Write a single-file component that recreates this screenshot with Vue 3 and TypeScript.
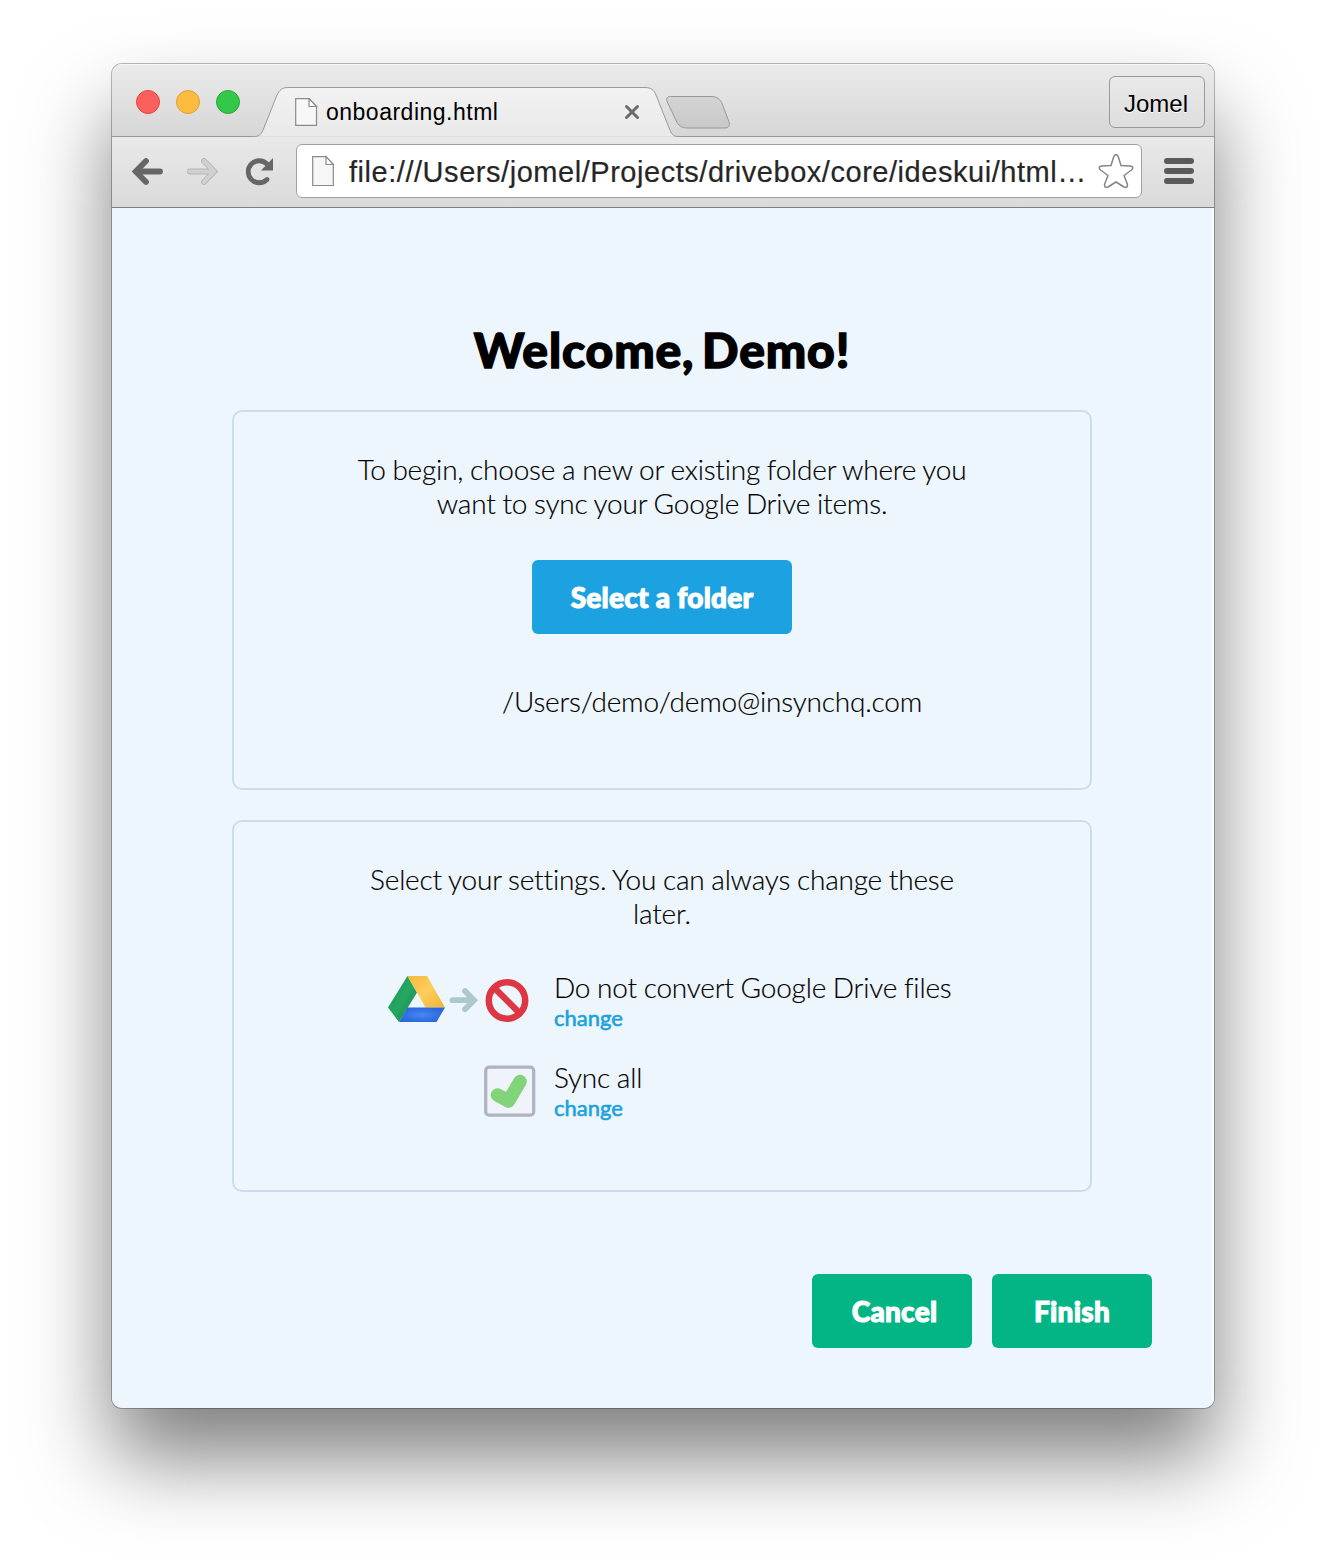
<script setup lang="ts">
interface Setting {
  id: 'convert' | 'sync'
  label: string
}

const settings: Setting[] = [
  { id: 'convert', label: 'Do not convert Google Drive files' },
  { id: 'sync', label: 'Sync all' },
]
const actions: string[] = ['Cancel', 'Finish']
const lights: string[] = ['red', 'yellow', 'green']
</script>

<template>
  <div class="desktop">
    <div class="window">
      <header class="tabstrip">
        <svg class="tab-shape" width="1102" height="73" viewBox="0 0 1102 73">
          <defs>
            <linearGradient id="tabFill" x1="0" y1="0" x2="0" y2="1">
              <stop offset="0" stop-color="#f2f2f2" />
              <stop offset="1" stop-color="#e9e9e9" />
            </linearGradient>
            <linearGradient id="newTab" x1="0" y1="0" x2="0" y2="1">
              <stop offset="0" stop-color="#d4d4d4" />
              <stop offset="1" stop-color="#c8c8c8" />
            </linearGradient>
          </defs>
          <path
            d="M-2 72.500H142.500C148 72.500 149.500 69.500 151.500 65L165 31C167.500 26 170 23.500 176 23.500H533C539 23.500 542 26 544 31L557.500 65C559.500 69.500 560.500 72.500 566 72.500H1104"
            fill="url(#tabFill)"
            stroke="#999"
          />
          <path
            d="M558.500 32.500H599C605 32.500 608 35 610.300 40L617 58C618.200 61.800 616.500 64 613 64H575.500C569.500 64 566.500 61.500 564.300 57L555.300 38C553.800 34.500 555 32.500 558.500 32.500Z"
            fill="url(#newTab)"
            stroke="#979797"
          />
        </svg>
        <div class="lights">
          <span v-for="c in lights" :key="c" class="light" :class="c" />
        </div>
        <div class="tab">
          <svg width="23" height="29" viewBox="0 0 23 29">
            <path d="M.7.700H14L21.500 8.500V27.300H.7Z" fill="#f7f7f7" stroke="#8a8a8a" stroke-width="1.200" />
            <path d="M14 .700V8.500H21.500Z" fill="#fff" stroke="#8a8a8a" stroke-width="1.200" />
          </svg>
          <span class="tab-title">onboarding.html</span>
          <svg class="close" width="16" height="16" viewBox="0 0 16 16">
            <path d="M2.500 2.500 13.500 13.500M13.500 2.500 2.500 13.500" stroke="#6b6b6b" stroke-width="3" stroke-linecap="round" />
          </svg>
        </div>
        <div class="profile">Jomel</div>
      </header>

      <nav class="toolbar">
        <svg class="nav-icon" width="150" height="34" viewBox="0 0 150 34">
          <g fill="none" stroke-linecap="round" stroke-linejoin="round">
            <g stroke="#666" stroke-width="5.800">
              <path d="M8.500 17.500H30" />
              <path d="M16 7 5.700 17.500 16 28" stroke-linejoin="miter" />
            </g>
            <g stroke="#b4b4b4" stroke-width="5.800">
              <path d="M60 17.500H83M74 7 84.300 17.500 74 28" stroke-linejoin="miter" />
            </g>
            <g stroke="#d0d0d0" stroke-width="4">
              <path d="M60 17.500H83M74 7 84.300 17.500 74 28" stroke-linejoin="miter" />
            </g>
            <path d="M137 25.500A11 11 0 1 1 137 10" stroke="#666" stroke-width="4.800" />
          </g>
          <path d="M143 4V16.500H131Z" fill="#666" />
        </svg>
        <div class="address">
          <svg width="24" height="32" viewBox="0 0 24 32">
            <path d="M.7 1.700H14L21.300 9.500V30.500H.7Z" fill="#f7f7f7" stroke="#8a8a8a" stroke-width="1.200" />
            <path d="M14 1.700V9.500H21.300Z" fill="#fff" stroke="#8a8a8a" stroke-width="1.200" />
          </svg>
          <span class="url">file:///Users/jomel/Projects/drivebox/core/ideskui/html…</span>
          <svg class="star" width="36" height="36" viewBox="0 0 36 36">
            <path
              d="M15.800 3.500Q18 -.5 20.200 3.500L23 12.500L32.500 13Q36.500 14 33.500 17L26 22.500L29.500 31.500Q29.500 35.500 26 34L18 29L10 34Q6.500 35.500 6.500 31.500L10 22.500L2.500 17Q-.5 14 3.500 13L13 12.500Z"
              fill="#fff"
              stroke="#858585"
              stroke-width="1.500"
              stroke-linejoin="round"
            />
          </svg>
        </div>
        <div class="menu"><i /><i /><i /></div>
      </nav>

      <main class="page">
        <h1>Welcome, Demo!</h1>
        <section class="card folder">
          <p>To begin, choose a new or existing folder where you<br />want to sync your Google Drive items.</p>
          <button class="btn blue">Select a folder</button>
          <div class="path">/Users/demo/demo@insynchq.com</div>
        </section>
        <section class="card settings">
          <p>Select your settings. You can always change these<br />later.</p>
          <div v-for="s in settings" :key="s.id" class="row">
            <div class="icon">
              <svg v-if="s.id === 'convert'" width="154" height="60" viewBox="0 0 154 60">
                <defs>
                  <linearGradient id="gGreen" x1="0" y1="0" x2="1" y2="1">
                    <stop offset="0" stop-color="#159152" />
                    <stop offset=".5" stop-color="#25a862" />
                    <stop offset="1" stop-color="#118348" />
                  </linearGradient>
                  <linearGradient id="gYellow" x1="0" y1="0" x2="1" y2="1">
                    <stop offset="0" stop-color="#f3b93c" />
                    <stop offset=".5" stop-color="#fdcd5c" />
                    <stop offset="1" stop-color="#efb336" />
                  </linearGradient>
                  <radialGradient id="gBlue">
                    <stop offset="0" stop-color="#4a86f5" />
                    <stop offset="1" stop-color="#2a68dc" />
                  </radialGradient>
                </defs>
                <path d="M23.500 6 33 22.500 15 52 4 37.500Z" fill="url(#gGreen)" />
                <path d="M23.500 6H43L61 37.500H41.500Z" fill="url(#gYellow)" />
                <path d="M23.500 37.500H61L52.500 52H15Z" fill="url(#gBlue)" />
                <path d="M68.500 30.200H88M81 21 90 30.200 81 39.200" fill="none" stroke="#adc8cb" stroke-width="5.800" stroke-linecap="round" />
                <circle cx="123" cy="30.500" r="18.200" fill="none" stroke="#dc3742" stroke-width="6.500" />
                <path d="M110.500 18 135.500 43" stroke="#dc3742" stroke-width="6.500" />
              </svg>
              <svg v-else width="154" height="60" viewBox="0 0 154 60">
                <rect x="101.700" y="7.200" width="48" height="48" rx="3.500" fill="#f0f4fa" stroke="#adb3bf" stroke-width="3.200" />
                <path d="M113.500 35 124.500 41 136 21.500" fill="none" stroke="#82d47a" stroke-width="13.500" stroke-linecap="round" stroke-linejoin="round" />
              </svg>
            </div>
            <div class="info">
              <span>{{ s.label }}</span>
              <a class="change">change</a>
            </div>
          </div>
        </section>
        <footer>
          <button v-for="a in actions" :key="a" class="btn green" :class="a.toLowerCase()">{{ a }}</button>
        </footer>
      </main>
    </div>
  </div>
</template>

<style>
body {
  background: #fff;
}
</style>

<style scoped>
* {
  box-sizing: border-box;
}
.desktop {
  height: 1568px;
  padding: 64px 112px 0;
  overflow: hidden;
  background: #fff;
  font-family: 'Liberation Sans', sans-serif;
}
.window {
  width: 1102px;
  height: 1344px;
  border-radius: 10px;
  overflow: hidden;
  box-shadow:
    0 0 0 1px rgba(0, 0, 0, 0.27),
    0 50px 84px rgba(0, 0, 0, 0.5);
}
.tabstrip {
  position: relative;
  display: flex;
  align-items: flex-start;
  height: 73px;
  background: linear-gradient(#ebebeb, #d6d6d6);
  box-shadow: inset 0 1px #f6f6f6;
}
.tab-shape {
  position: absolute;
  inset: 0;
}
.lights {
  display: flex;
  gap: 16px;
  padding: 26px 0 0 24px;
  width: 183px;
  position: relative;
}
.light {
  width: 24px;
  height: 24px;
  border-radius: 50%;
  border: 1px solid;
}
.red {
  background: #fc605c;
  border-color: #e2453f;
}
.yellow {
  background: #fdbc40;
  border-color: #dfa033;
}
.green.light {
  background: #34c84a;
  border-color: #27aa35;
}
.tab {
  position: relative;
  display: flex;
  align-items: center;
  width: 345px;
  height: 30px;
  margin-top: 33px;
}
.tab-title {
  margin-left: 8px;
  font-size: 23px;
  line-height: 30px;
  letter-spacing: 0.5px;
  color: #000;
}
.close {
  margin-left: auto;
}
.profile {
  position: relative;
  width: 96px;
  height: 52px;
  margin: 12px 9px 0 auto;
  padding-right: 2px;
  border: 1px solid #999;
  border-radius: 6px;
  background: linear-gradient(#e9e9e9, #dedede);
  font-size: 24px;
  line-height: 53px;
  text-align: center;
  text-shadow: 0 1px #fff;
}
.toolbar {
  display: flex;
  align-items: center;
  height: 71px;
  padding: 0 20px 3px 18px;
  background: linear-gradient(#e9e9e9, #dadada);
  border-bottom: 1px solid #7d7d7d;
}
.nav-icon {
  flex: none;
}
.address {
  display: flex;
  align-items: center;
  width: 846px;
  height: 54px;
  margin-left: 16px;
  padding: 0 7px 0 15px;
  border: 1px solid #a0a0a0;
  border-radius: 6px;
  background: #fff;
}
.url {
  margin-left: 13px;
  padding-top: 2px;
  font-size: 29px;
  line-height: 34px;
  letter-spacing: 0.54px;
  color: #262626;
  white-space: nowrap;
  -webkit-text-stroke: 0.200px #262626;
}
.star {
  flex: none;
  margin-left: auto;
}
.menu {
  display: flex;
  flex-direction: column;
  gap: 4px;
  margin-left: 22px;
}
.menu i {
  width: 30px;
  height: 6px;
  border-radius: 3px;
  background: #5a5a5a;
}
.page {
  height: 1200px;
  padding: 113px 120px 0;
  background: #edf5fd;
  border-right: 2px solid #f8fbff;
  font-family: Lato, sans-serif;
  font-variant-ligatures: none;
  color: #000;
}
h1 {
  margin: 0 0 31px;
  font-size: 48px;
  font-weight: 900;
  line-height: 58px;
  letter-spacing: 0.85px;
  word-spacing: -4.500px;
  text-align: center;
  -webkit-text-stroke: 1.400px #000;
}
.card {
  display: flex;
  flex-direction: column;
  border: 2px solid #ccdcec;
  border-radius: 10px;
  padding-top: 40px;
  font-size: 28px;
  font-weight: 300;
  line-height: 34px;
  letter-spacing: -0.2px;
  word-spacing: -0.6px;
  -webkit-text-stroke: 0.150px #000;
}
.folder {
  height: 380px;
  align-items: center;
}
.settings {
  height: 372px;
  margin-top: 30px;
}
p {
  margin: 0 0 40px;
  text-align: center;
}
.btn {
  height: 74px;
  border: 0;
  border-radius: 6px;
  padding: 0;
  font: 900 28px/74px Lato, sans-serif;
  letter-spacing: 0.25px;
  color: #fff;
  -webkit-text-stroke: 1.100px #fff;
}
.blue {
  width: 260px;
  background: #1ca2e0;
}
.path {
  align-self: flex-start;
  margin: 50px 0 0 268px;
}
.row {
  display: flex;
  height: 60px;
  margin: 0 0 30px 150px;
}
.icon {
  width: 154px;
}
.info {
  display: flex;
  flex-direction: column;
  align-items: flex-start;
  margin-left: 16px;
}
.change {
  padding-top: 1px;
  font-size: 22px;
  font-weight: 400;
  line-height: 26px;
  letter-spacing: 0;
  color: #1ca2e0;
  -webkit-text-stroke: 0.600px #1ca2e0;
}
footer {
  display: flex;
  justify-content: flex-end;
  gap: 20px;
  margin: 82px -60px 0 0;
}
.btn.green {
  width: 160px;
  background: #03b585;
}
.btn.cancel {
  padding-left: 5px;
}
</style>
